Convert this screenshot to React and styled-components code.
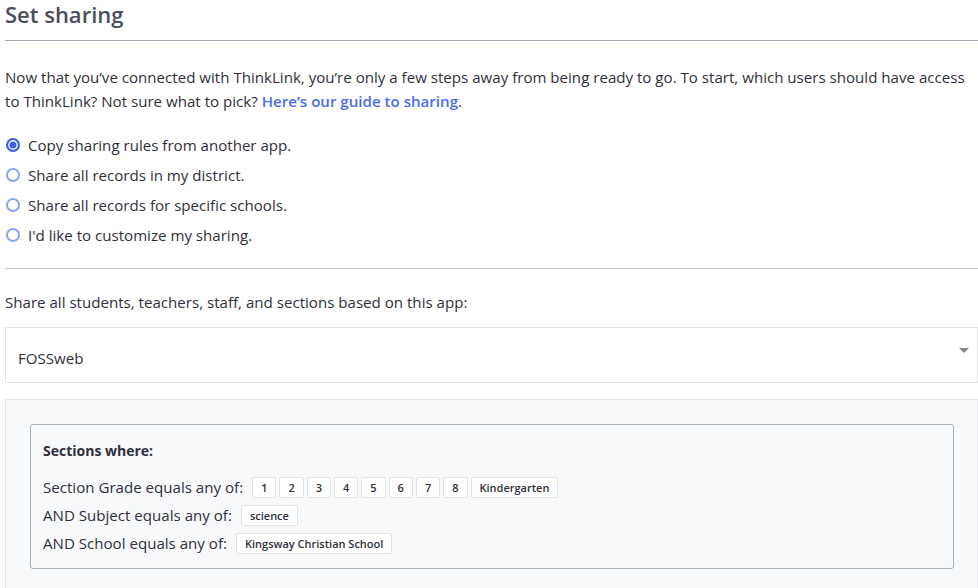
import React, { useState } from "react";
import styled, { createGlobalStyle } from "styled-components";

const GlobalStyle = createGlobalStyle`
  body {
    margin: 0;
    background: #fff;
    overflow: hidden;
    font-family: "Open Sans", "Lato", sans-serif;
    color: #2f2f3b;
  }
`;

const options = [
  "Copy sharing rules from another app.",
  "Share all records in my district.",
  "Share all records for specific schools.",
  "I'd like to customize my sharing.",
];

const rules = [
  {
    label: "Section Grade equals any of:",
    values: ["1", "2", "3", "4", "5", "6", "7", "8", "Kindergarten"],
  },
  { label: "AND Subject equals any of:", values: ["science"] },
  { label: "AND School equals any of:", values: ["Kingsway Christian School"] },
];

const App = () => {
  const [choice, setChoice] = useState(0);

  return (
    <Wrapper>
      <GlobalStyle />
      <Title>Set sharing</Title>
      <Divider $strong />
      <Intro>
        Now that you’ve connected with ThinkLink, you’re only a few steps away
        from being ready to go. To start, which users should have access to
        ThinkLink? Not sure what to pick? <a href="#guide">Here’s our guide to sharing</a>.
      </Intro>
      <Options>
        {options.map((text, i) => (
          <Option key={text} onClick={() => setChoice(i)}>
            <Radio $checked={choice === i} />
            {text}
          </Option>
        ))}
      </Options>
      <Divider />
      <Label>Share all students, teachers, staff, and sections based on this app:</Label>
      <Select>
        <span>FOSSweb</span>
        <Caret />
      </Select>
      <Panel>
        <RuleBox>
          <RuleTitle>Sections where:</RuleTitle>
          {rules.map((rule) => (
            <RuleRow key={rule.label}>
              <span>{rule.label}</span>
              <Chips>
                {rule.values.map((v) => (
                  <Chip key={v}>{v}</Chip>
                ))}
              </Chips>
            </RuleRow>
          ))}
        </RuleBox>
      </Panel>
    </Wrapper>
  );
};

export default App;

const Wrapper = styled.div`
  width: 973px;
  padding-left: 5px;
`;

const Title = styled.h1`
  margin: 0;
  font-size: 22px;
  line-height: 28px;
  font-weight: 600;
  color: #4a4e5c;
`;

const Divider = styled.hr`
  margin: 0;
  border: none;
  border-top: 1px solid ${(p) => (p.$strong ? "#a3a8b5" : "#c7cad1")};
  ${(p) => (p.$strong ? "margin-top: 12px;" : "margin-top: 18px;")}
`;

const Intro = styled.p`
  margin: 24px 0 0;
  font-size: 15.1px;
  line-height: 24px;
  a {
    color: #4a6cf0;
    font-weight: 600;
    text-decoration: none;
  }
`;

const Options = styled.div`
  margin-top: 17px;
  display: flex;
  flex-direction: column;
`;

const Option = styled.label`
  display: flex;
  align-items: center;
  gap: 8px;
  height: 30px;
  font-size: 15.1px;
  cursor: pointer;
  padding-left: 1px;
`;

const Radio = styled.span`
  width: 14px;
  height: 14px;
  box-sizing: border-box;
  border-radius: 50%;
  border: 2px solid ${(p) => (p.$checked ? "#3d63e6" : "#8da2f2")};
  background: ${(p) => (p.$checked ? "#3d63e6" : "#fff")};
  box-shadow: ${(p) => (p.$checked ? "inset 0 0 0 1.5px #fff" : "none")};
  flex-shrink: 0;
`;

const Label = styled.div`
  margin-top: 21px;
  font-size: 15.1px;
  line-height: 24px;
`;

const Select = styled.div`
  margin-top: 13px;
  height: 56px;
  box-sizing: border-box;
  border: 1px solid #e2e4e9;
  display: flex;
  align-items: center;
  justify-content: space-between;
  padding: 0 8px 0 12px;
  font-size: 15.1px;
  span {
    padding-top: 6px;
  }
`;

const Caret = styled.span`
  width: 0;
  height: 0;
  border-left: 5px solid transparent;
  border-right: 5px solid transparent;
  border-top: 5px solid #8a8a8a;
  margin-bottom: 3px;
`;

const Panel = styled.div`
  margin-top: 16px;
  background: #f8f9fb;
  border: 1px solid #e3e5ea;
  padding: 24px 23px 24px 24px;
`;

const RuleBox = styled.div`
  border: 1px solid #a9adb6;
  border-radius: 3px;
  padding: 17px 12px 11px;
`;

const RuleTitle = styled.div`
  font-size: 14px;
  font-weight: 700;
  line-height: 18px;
  margin-bottom: 13px;
`;

const RuleRow = styled.div`
  display: flex;
  align-items: center;
  gap: 9px;
  height: 28px;
  font-size: 15.1px;
`;

const Chips = styled.div`
  display: flex;
  gap: 3px;
`;

const Chip = styled.span`
  min-width: 24px;
  height: 21px;
  box-sizing: border-box;
  padding: 0 8px;
  display: inline-flex;
  align-items: center;
  justify-content: center;
  background: #fff;
  border: 1px solid #e1e3e7;
  border-radius: 2px;
  font-size: 11px;
  font-weight: 600;
  color: #2f2f3b;
`;
